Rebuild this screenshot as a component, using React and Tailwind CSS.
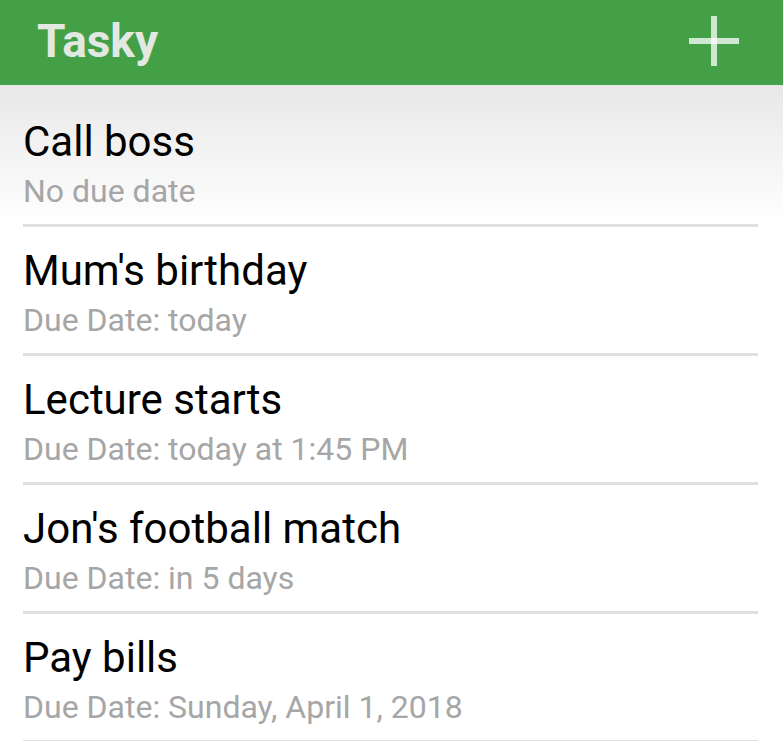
import React from 'react';

const tasks = [
  { title: 'Call boss', due: 'No due date' },
  { title: "Mum's birthday", due: 'Due Date: today' },
  { title: 'Lecture starts', due: 'Due Date: today at 1:45 PM' },
  { title: "Jon's football match", due: 'Due Date: in 5 days' },
  { title: 'Pay bills', due: 'Due Date: Sunday, April 1, 2018' },
];

function PlusIcon() {
  return (
    <svg width="50" height="50" viewBox="0 0 50 50" className="text-white/75">
      <rect x="0" y="22" width="50" height="6" fill="currentColor" />
      <rect x="22" y="0" width="6" height="50" fill="currentColor" />
    </svg>
  );
}

export default function App() {
  return (
    <div className="w-[783px] h-[741px] overflow-hidden bg-white font-['Roboto',sans-serif]">
      <header className="h-[85px] bg-[#43a047] flex items-center justify-between pl-[37px] pr-[44px]">
        <h1 className="text-[46px] font-bold leading-none text-[#e3e8e3] -mt-1">Tasky</h1>
        <button className="-mt-1">
          <PlusIcon />
        </button>
      </header>
      <ul className="pt-[13px] bg-gradient-to-b from-[#e8e8e8] via-white via-[140px] to-white">
        {tasks.map((t) => (
          <li key={t.title} className="ml-[23px] mr-[25px] pt-[20px] pb-[7px] border-b-[3px] border-[#e0e0e0]">
            <div className="text-[42px] leading-[48px] text-black">{t.title}</div>
            <div className="text-[32px] leading-[51px] text-[#a6a6a6]">{t.due}</div>
          </li>
        ))}
      </ul>
    </div>
  );
}
